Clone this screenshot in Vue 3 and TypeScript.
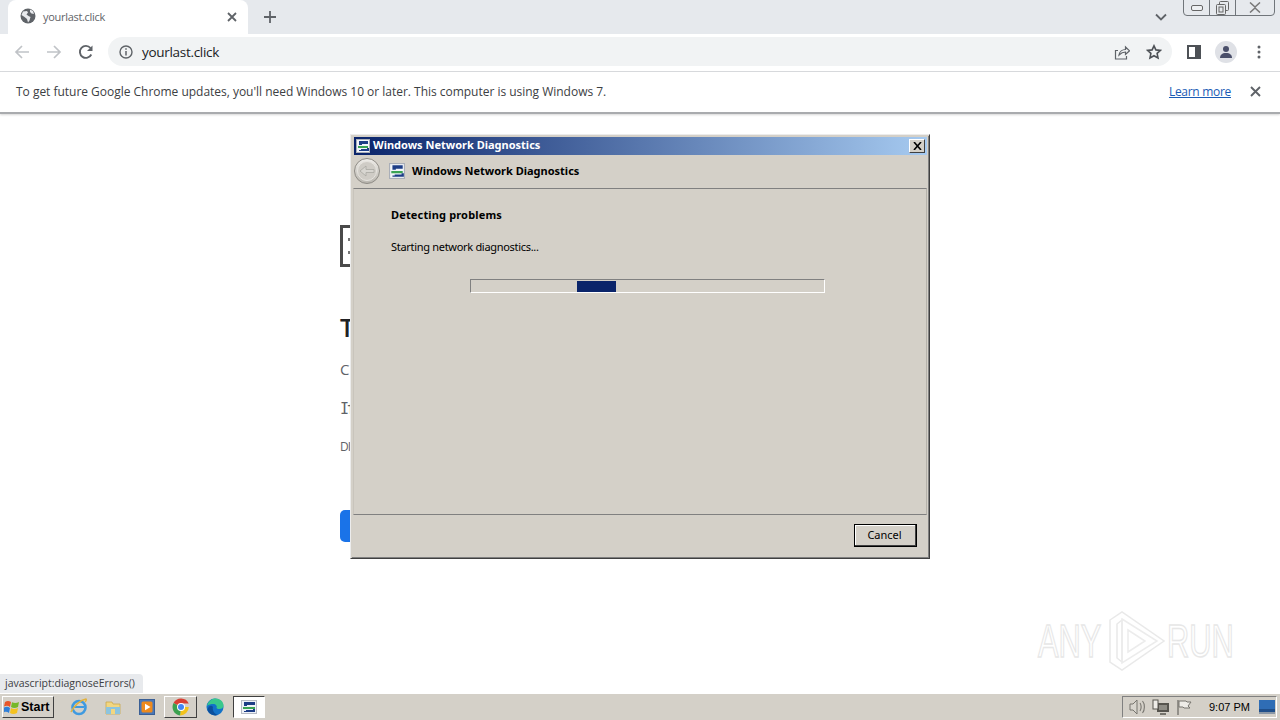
<script setup lang="ts">
const taskIcons = ['ie', 'folder', 'wmp', 'chrome', 'edge', 'diag'];
</script>

<template>
  <div class="screen">
    <header class="tabstrip">
      <div class="tab">
        <svg class="globe" width="16" height="16" viewBox="0 0 16 16">
          <circle cx="8" cy="8" r="7.5" fill="#5f6368" />
          <path d="M3 3.500 7 3l1 1.500-1.500 2L8.500 8l2 1-1 3.500-1.500 2L7 11 4.500 9 1.500 7zM10 1.500l3 1.500 1 3-2.500-.5L10 4z" fill="#e8eaed" />
        </svg>
        <span class="tab-title">yourlast.click</span>
        <svg class="tab-close" width="10" height="10" viewBox="0 0 10 10"><path d="M1 1l8 8M9 1 1 9" stroke="#5f6368" stroke-width="1.800" /></svg>
      </div>
      <svg class="newtab" width="14" height="14" viewBox="0 0 14 14"><path d="M7 1v12M1 7h12" stroke="#5f6368" stroke-width="1.800" /></svg>
      <svg class="chev" width="12" height="8" viewBox="0 0 12 8"><path d="M1 1.500l5 5 5-5" fill="none" stroke="#5f6368" stroke-width="1.800" /></svg>
      <div class="winctl">
        <span class="w-btn w-min"><svg width="12" height="6" viewBox="0 0 12 6"><rect x=".5" y=".5" width="11" height="5" rx="1.500" fill="#eef0f2" stroke="#666" /></svg></span>
        <span class="w-btn w-max"><svg width="13" height="14" viewBox="0 0 13 14"><rect x="3.500" y=".5" width="9" height="9" rx="1" fill="none" stroke="#666" /><rect x=".5" y="3.500" width="9" height="10" rx="1" fill="#e6e9ec" stroke="#666" /><rect x="3" y="6" width="4" height="5" fill="none" stroke="#666" /></svg></span>
        <span class="w-btn w-close"><svg width="12" height="11" viewBox="0 0 12 11"><path d="M1 .5 6 5l5-4.500M1 10.500 6 6l5 4.500" fill="none" stroke="#777" stroke-width="1.500" /></svg></span>
      </div>
    </header>

    <nav class="toolbar">
      <svg class="tb-icon" width="16" height="16" viewBox="0 0 16 16"><path d="M15 8H2M8 2 2 8l6 6" fill="none" stroke="#c0c3c7" stroke-width="1.700" /></svg>
      <svg class="tb-icon" width="16" height="16" viewBox="0 0 16 16"><path d="M1 8h13M8 2l6 6-6 6" fill="none" stroke="#c0c3c7" stroke-width="1.700" /></svg>
      <svg class="tb-icon" width="16" height="16" viewBox="0 0 16 16"><path d="M13.300 10.500A6 6 0 1 1 12.500 4" fill="none" stroke="#5f6368" stroke-width="1.900" /><path d="M14.500 1.500v5.500H9z" fill="#5f6368" /></svg>
      <div class="omnibox">
        <svg width="14" height="14" viewBox="0 0 14 14"><circle cx="7" cy="7" r="6" fill="none" stroke="#5f6368" stroke-width="1.400" /><path d="M7 6v4.500M7 3.300v1.500" stroke="#5f6368" stroke-width="1.500" /></svg>
        <span class="url">yourlast.click</span>
        <svg class="share" width="16" height="16" viewBox="0 0 16 16"><path d="M4 6.500H1.500V15h11v-3" fill="none" stroke="#5f6368" stroke-width="1.200" /><path d="M5 11c.5-3.500 3.500-5.500 6.500-5.500V3l4 3.800-4 3.700V8C9 8 7 9 5 11z" fill="none" stroke="#5f6368" stroke-width="1.200" /></svg>
        <svg class="star" width="16" height="16" viewBox="0 0 16 16"><path d="M8 1.800l1.900 4.100 4.500.5-3.300 3 .9 4.500L8 11.700l-4 2.200.9-4.500-3.300-3 4.500-.5z" fill="none" stroke="#4d5156" stroke-width="1.600" /></svg>
      </div>
      <svg class="side" width="14" height="14" viewBox="0 0 14 14"><rect width="14" height="14" fill="#4d5156" /><rect x="2" y="2" width="6" height="10" fill="#fff" /></svg>
      <span class="avatar">
        <svg width="14" height="14" viewBox="0 0 14 14"><circle cx="7" cy="4" r="3" fill="#4a4f6a" /><path d="M1 13c0-3 2-5 6-5s6 2 6 5z" fill="#4a4f6a" /></svg>
      </span>
      <svg class="dots" width="4" height="14" viewBox="0 0 4 14"><circle cx="2" cy="2" r="1.500" fill="#5f6368" /><circle cx="2" cy="7" r="1.500" fill="#5f6368" /><circle cx="2" cy="12" r="1.500" fill="#5f6368" /></svg>
    </nav>

    <div class="infobar">
      <span class="info-text">To get future Google Chrome updates, you'll need Windows 10 or later. This computer is using Windows 7.</span>
      <a class="learn">Learn more</a>
      <svg class="info-close" width="11" height="11" viewBox="0 0 11 11"><path d="M1 1l9 9M10 1 1 10" stroke="#5f6368" stroke-width="1.900" /></svg>
    </div>

    <main class="page">
      <div class="err-box"><i></i><i></i></div>
      <h1>T</h1>
      <p class="p1">C</p>
      <p class="p2">If</p>
      <p class="p3">DI</p>
      <div class="blue-btn"></div>

      <div class="watermark" aria-label="ANY.RUN">
        <span class="wm-text">ANY</span>
        <svg width="58" height="62" viewBox="0 0 58 62">
          <path d="M2 10 14 2l42 29-42 29-12-8zM9 14v34l5 4V10z" fill="none" stroke="#e9e9e9" stroke-width="1.500" />
          <path d="M14 9 49 31 14 53zM20 20v22l17-11z" fill="none" stroke="#ececec" stroke-width="1.500" />
        </svg>
        <span class="wm-text">RUN</span>
      </div>

      <div class="status">javascript:diagnoseErrors()</div>

      <section class="dialog">
        <div class="titlebar">
          <svg class="diag-ic" width="14" height="14" viewBox="0 0 14 14">
            <rect x=".5" y=".5" width="13" height="13" fill="#f2f5fa" stroke="#a9aeb8" />
            <path d="M3 2h9v3H6v1H3z" fill="#1d3d86" />
            <path d="M2 7h10v2H2z" fill="#3aa354" />
            <path d="M5 10h6V9h2v3H3v-1h2z" fill="#1d3d86" />
          </svg>
          <span class="title">Windows Network Diagnostics</span>
          <span class="x-btn"><svg width="9" height="8" viewBox="0 0 9 8"><path d="M1 0l7 8M8 0 1 8" stroke="#000" stroke-width="1.600" /></svg></span>
        </div>
        <div class="head">
          <span class="back">
            <svg width="26" height="26" viewBox="0 0 26 26">
              <defs><linearGradient id="bk" x1="0" y1="0" x2="0" y2="1"><stop offset="0" stop-color="#f0eeea" /><stop offset="1" stop-color="#b8b5ae" /></linearGradient></defs>
              <circle cx="13" cy="13" r="12.500" fill="url(#bk)" stroke="#8f8c86" />
              <circle cx="13" cy="13" r="9.500" fill="#cfccc6" stroke="#e6e4df" />
              <path d="M20 11.500h-8V8l-6 5 6 5v-3.500h8z" fill="#d8d6d1" stroke="#aaa8a2" stroke-width=".8" />
            </svg>
          </span>
          <svg class="diag-ic2" width="16" height="16" viewBox="0 0 14 14">
            <rect x=".5" y=".5" width="13" height="13" fill="#f2f5fa" stroke="#a9aeb8" />
            <path d="M3 2h9v3H6v1H3z" fill="#1d3d86" />
            <path d="M2 7h10v2H2z" fill="#3aa354" />
            <path d="M5 10h6V9h2v3H3v-1h2z" fill="#1d3d86" />
          </svg>
          <span class="head-title">Windows Network Diagnostics</span>
        </div>
        <div class="panel">
          <div class="panel-h">Detecting problems</div>
          <div class="panel-t">Starting network diagnostics...</div>
          <div class="progress"><div class="chunk"></div></div>
        </div>
        <div class="foot"><button class="cancel">Cancel</button></div>
      </section>
    </main>

    <footer class="taskbar">
      <button class="start">
        <svg width="17" height="15" viewBox="0 0 17 15">
          <path d="M1 2c2-1.500 4-1.500 6 0L6 7C4 5.500 2.500 5.500 0 6.500z" fill="#e8562a" />
          <path d="M8 2.300c2.500 1.200 4.500 1 7-.3l-1 5c-2.500 1.200-5 1.200-7 0z" fill="#76b82a" />
          <path d="M0 7.500c2.500-1 4-1 6 .5l-1 5c-2-1.500-3.500-1.500-6-.5z" fill="#2f7fd8" />
          <path d="M7 8c2 1.200 4.500 1.200 7 0l-1 5c-2.500 1.200-5 1.200-7 0z" fill="#f4c21f" />
        </svg>
        <span>Start</span>
      </button>
      <div class="quick">
        <span v-for="n in taskIcons" :key="n" class="task" :class="'t-' + n">
          <svg v-if="n === 'ie'" width="18" height="18" viewBox="0 0 18 18">
            <circle cx="9" cy="9.500" r="6.500" fill="none" stroke="#3f9ae0" stroke-width="2.600" />
            <path d="M4 9h10" stroke="#3f9ae0" stroke-width="2" />
            <path d="M1 14C4 8 10 2 16 1c1 1-1 3-1 3" fill="none" stroke="#e3b23c" stroke-width="1.400" />
          </svg>
          <svg v-else-if="n === 'folder'" width="18" height="18" viewBox="0 0 18 18">
            <path d="M2 4h6l1 2h7v10H2z" fill="#f2d680" stroke="#c9a84f" stroke-width=".8" />
            <rect x="2" y="9" width="14" height="7" fill="#8cc4df" />
            <rect x="7" y="11" width="4" height="5" fill="#f2d680" />
          </svg>
          <svg v-else-if="n === 'wmp'" width="16" height="16" viewBox="0 0 16 16">
            <rect x=".5" y=".5" width="15" height="15" fill="#4a78b8" stroke="#3a5f95" />
            <rect x="2.500" y="2.500" width="11" height="11" rx="1.500" fill="#ee8a1d" />
            <path d="M6 4.800v6.400L11.500 8z" fill="#fff" />
          </svg>
          <svg v-else-if="n === 'chrome'" width="18" height="18" viewBox="0 0 18 18">
            <path d="M9 9 1.500 5A8.500 8.500 0 0 1 16.800 5.500H9z" fill="#d93f33" />
            <path d="M9 9H16.800A8.500 8.500 0 0 1 8 17.400z" fill="#f2c21b" />
            <path d="M9 9 8 17.400A8.500 8.500 0 0 1 1.500 5z" fill="#3ba14f" />
            <circle cx="9" cy="9" r="4" fill="#fff" /><circle cx="9" cy="9" r="3" fill="#4285f4" />
          </svg>
          <svg v-else-if="n === 'edge'" width="18" height="18" viewBox="0 0 18 18">
            <circle cx="9" cy="9" r="8.500" fill="#1272c8" />
            <path d="M1 8C2 3 6 .5 9.500.5c4.500 0 8 3 8 7 0 2.500-2 3.500-4 3.500-1.500 0-3-.5-3-1.500 1-1-.5-3.500-3-3.500C5 6 2.500 6.500 1 8z" fill="#38c88c" />
            <path d="M7 9c-1 3 1 7 5 8-4 1.500-9-1-10.500-5C2 8 5.500 6.500 7 9z" fill="#0b4f9c" />
          </svg>
          <svg v-else width="16" height="14" viewBox="0 0 16 14">
            <rect x=".5" y=".5" width="15" height="13" fill="#eef1f7" stroke="#b6bac4" />
            <path d="M3 2h11v3H6v1H3z" fill="#1d3d86" />
            <path d="M2 7h12v2H2z" fill="#3aa354" />
            <path d="M5 10h7V9h2v3H3v-1h2z" fill="#1d3d86" />
          </svg>
        </span>
      </div>
      <div class="tray">
        <svg width="18" height="16" viewBox="0 0 18 16"><path d="M2 5h3l4-4v14l-4-4H2z" fill="#d8d5ce" stroke="#77756f" /><path d="M12 4c1.500 2 1.500 6 0 8M14.500 2c2.500 3 2.500 9 0 12" fill="none" stroke="#77756f" stroke-width="1.100" /></svg>
        <svg width="18" height="16" viewBox="0 0 18 16"><rect x="5" y="4" width="12" height="9" fill="#56544e" /><rect x="7" y="6" width="8" height="5" fill="#8e8c85" /><rect x="1" y="1" width="5" height="9" fill="#eeece7" stroke="#56544e" /><path d="M8 15h6" stroke="#56544e" stroke-width="1.500" /></svg>
        <svg width="16" height="17" viewBox="0 0 16 17"><path d="M2 1v15" stroke="#77756f" stroke-width="1.400" /><path d="M3 2h7l1 1h4l-3 4 2 2H8L7 8H3z" fill="#eeece7" stroke="#77756f" /></svg>
        <span class="clock">9:07 PM</span>
        <svg class="desk" width="16" height="14" viewBox="0 0 16 14"><rect width="16" height="12" fill="#2f6db5" /><rect y="9" width="16" height="3" fill="#204f8a" /><rect y="12" width="16" height="2" fill="#8a97a6" /></svg>
      </div>
    </footer>
  </div>
</template>

<style scoped>
.screen { width: 1280px; height: 720px; display: flex; flex-direction: column; overflow: hidden; background: #fff; font-family: "Open Sans", "Noto Sans", sans-serif; }
.tabstrip { height: 34px; background: #e6e9ed; display: flex; align-items: center; flex: none; position: relative; }
.tab { width: 240px; height: 34px; margin-left: 8px; background: #fff; border-radius: 8px 8px 0 0; display: flex; align-items: center; padding: 0 11px 2px 12px; box-sizing: border-box; }
.tab-title { font-size: 11px; color: #5f6368; margin-left: 7px; flex: 1; letter-spacing: -.3px; }
.tab-close { margin-top: 1px; }
.newtab { margin-left: 15px; }
.chev { margin-left: auto; margin-right: 113px; }
.winctl { position: absolute; top: -1px; right: 5px; width: 92px; height: 17px; border: 1px solid #70757a; border-radius: 0 0 4px 4px; box-sizing: border-box; display: flex; }
.w-btn { display: flex; align-items: center; justify-content: center; }
.w-min { width: 25px; border-right: 1px solid #70757a; }
.w-max { width: 25px; border-right: 1px solid #70757a; }
.w-close { flex: 1; }
.toolbar { height: 38px; flex: none; display: flex; align-items: center; padding: 0 0 2px 14px; box-sizing: border-box; border-bottom: 1px solid #d8dadd; }
.tb-icon { margin-right: 16px; }
.tb-icon:nth-child(3) { margin-right: 14px; }
.omnibox { width: 1064px; height: 29px; background: #f1f3f4; border-radius: 15px; display: flex; align-items: center; padding-left: 11px; box-sizing: border-box; }
.url { font-size: 13.500px; color: #202124; margin-left: 9px; flex: 1; letter-spacing: -.3px; }
.share { margin-right: 16px; }
.star { margin-right: 10px; }
.side { margin-left: 15px; }
.avatar { width: 22px; height: 22px; border-radius: 50%; background: #dfe1e6; display: flex; align-items: center; justify-content: center; margin-left: 14px; }
.dots { margin-left: 20px; }
.infobar { height: 42px; flex: none; display: flex; align-items: center; padding: 0 19px 2px 16px; box-sizing: border-box; border-bottom: 2px solid #a9abae; box-shadow: 0 1px 2px #d6d6d6; position: relative; z-index: 1; background: #fff; }
.info-text { font-size: 12px; color: #3c4043; flex: 1; letter-spacing: -.02px; }
.learn { font-size: 12px; color: #1a5bb5; text-decoration: underline; margin-right: 19px; letter-spacing: -.3px; }
.page { flex: 1; position: relative; padding: 111px 0 0 340px; box-sizing: border-box; color: #5f6368; }
.err-box { width: 42px; height: 42px; border: 3px solid #4a4a4a; box-sizing: border-box; display: flex; flex-direction: column; justify-content: center; gap: 10px; padding-left: 5px; }
.err-box i { width: 3px; height: 3px; background: #777; }
h1 { margin: 44px 0 0; font-size: 25px; line-height: 32px; font-weight: 600; color: #202124; }
.p1, .p2, .p3 { margin: 0; line-height: 20px; }
.p1 { font-size: 15px; margin-top: 16px; }
.p2 { font-size: 15px; margin-top: 20px; font-family: "DejaVu Sans Mono", monospace; letter-spacing: -2.500px; }
.p3 { font-size: 12px; margin-top: 18px; letter-spacing: -1px; }
.blue-btn { width: 60px; height: 32px; background: #1a73e8; border-radius: 5px; margin-top: 53px; }
.watermark { position: absolute; left: 1038px; top: 496px; display: flex; align-items: center; width: 200px; height: 62px; }
.wm-text { font-family: "Liberation Sans", sans-serif; font-size: 46px; line-height: 62px; width: 65px; color: #fff; -webkit-text-stroke: 1.500px #e7e7e7; transform: scaleX(.67); transform-origin: left center; flex: none; }
.watermark svg { flex: none; margin: 0 1px 0 5px; }
.status { position: absolute; left: 0; bottom: 0; width: 143px; height: 19px; background: #e8eaed; border-radius: 0 4px 0 0; font-size: 10.500px; line-height: 19px; padding-left: 5px; box-sizing: border-box; color: #3c4043; white-space: nowrap; }
.dialog { position: absolute; left: 350px; top: 20px; width: 580px; height: 425px; box-sizing: border-box; background: #d4d0c8; border: 1px solid; border-color: #ececec #404040 #404040 #ececec; box-shadow: inset 1px 1px 0 #d4d0c8, inset -1px -1px 0 #808080; padding: 2px 2px 2px 3px; display: flex; flex-direction: column; font-family: "Noto Sans", Tahoma, sans-serif; color: #000; font-size: 11px; }
.titlebar { height: 18px; flex: none; background: linear-gradient(90deg, #0a246a, #a6caf0); display: flex; align-items: center; padding: 0 2px; color: #fff; }
.title { font-weight: 700; font-size: 11px; line-height: 14px; margin: 0 0 2px 3px; flex: 1; }
.x-btn { width: 16px; height: 14px; background: #d4d0c8; border: 1px solid; border-color: #fff #404040 #404040 #fff; box-sizing: border-box; display: flex; align-items: center; justify-content: center; }
.head { height: 33px; flex: none; display: flex; align-items: center; margin-left: -2px; padding: 0 0 2px 2px; box-sizing: border-box; }
.diag-ic2 { margin-left: 9px; }
.back { display: flex; }
.head-title { font-weight: 700; font-size: 11px; margin-left: 7px; }
.panel { flex: none; height: 327px; box-sizing: border-box; margin: 0 0 0 -1px; border: 1px solid; border-color: #808080 #b5b2ab #808080 #c8c4bc; padding: 19px 0 0 37px; }
.panel-h { font-weight: 700; font-size: 11px; line-height: 14px; letter-spacing: .15px; }
.panel-t { font-size: 11px; line-height: 14px; margin-top: 18px; letter-spacing: -.3px; }
.progress { width: 355px; height: 14px; margin: 25px 0 0 79px; box-sizing: border-box; border: 1px solid; border-color: #808080 #fff #fff #808080; padding: 1px 0 0 106px; }
.chunk { width: 39px; height: 11px; background: #0a246a; }
.foot { flex: 1; display: flex; justify-content: flex-end; align-items: flex-start; padding: 9px 10px 0 0; }
.cancel { width: 63px; height: 23px; background: #d4d0c8; border: 1px solid #000; box-shadow: inset -1px -1px 0 #404040, inset 1px 1px 0 #fff; font-family: "Noto Sans", sans-serif; font-size: 11px; line-height: 14px; color: #000; padding: 0 2px 2px 0; }
.taskbar { height: 27px; flex: none; background: #d4d0c8; border-top: 1px solid #fff; box-sizing: border-box; display: flex; align-items: center; padding-left: 2px; position: relative; z-index: 2; }
.start { width: 52px; height: 22px; display: flex; align-items: center; gap: 0; padding: 0 0 0 1px; background: #d4d0c8; border: 1px solid; border-color: #fff #404040 #404040 #fff; font-family: "Liberation Sans", sans-serif; font-weight: 700; font-size: 12.500px; color: #000; box-sizing: border-box; }
.quick { display: flex; align-items: center; margin-left: 8px; height: 22px; }
.task { height: 22px; display: flex; align-items: center; justify-content: center; box-sizing: border-box; width: 34px; }
.t-chrome { width: 33px; border: 1px solid; border-color: #fff #404040 #404040 #fff; }
.t-edge { width: 35px; }
.t-diag { width: 32px; border: 1px solid; border-color: #404040 #fff #fff #404040; background: #fff; margin-left: 1px; }
.tray { margin-left: auto; margin-right: 3px; width: 155px; height: 22px; border: 1px solid; border-color: #808080 #fff #fff #808080; box-sizing: border-box; display: flex; align-items: center; padding-left: 5px; gap: 6px; }
.clock { font-family: "Liberation Sans", Tahoma, sans-serif; font-size: 11px; color: #000; margin-left: 11px; white-space: nowrap; }
.desk { margin-left: 3px; }
</style>
<style>
html, body { margin: 0; padding: 0; background: #fff; }
</style>
